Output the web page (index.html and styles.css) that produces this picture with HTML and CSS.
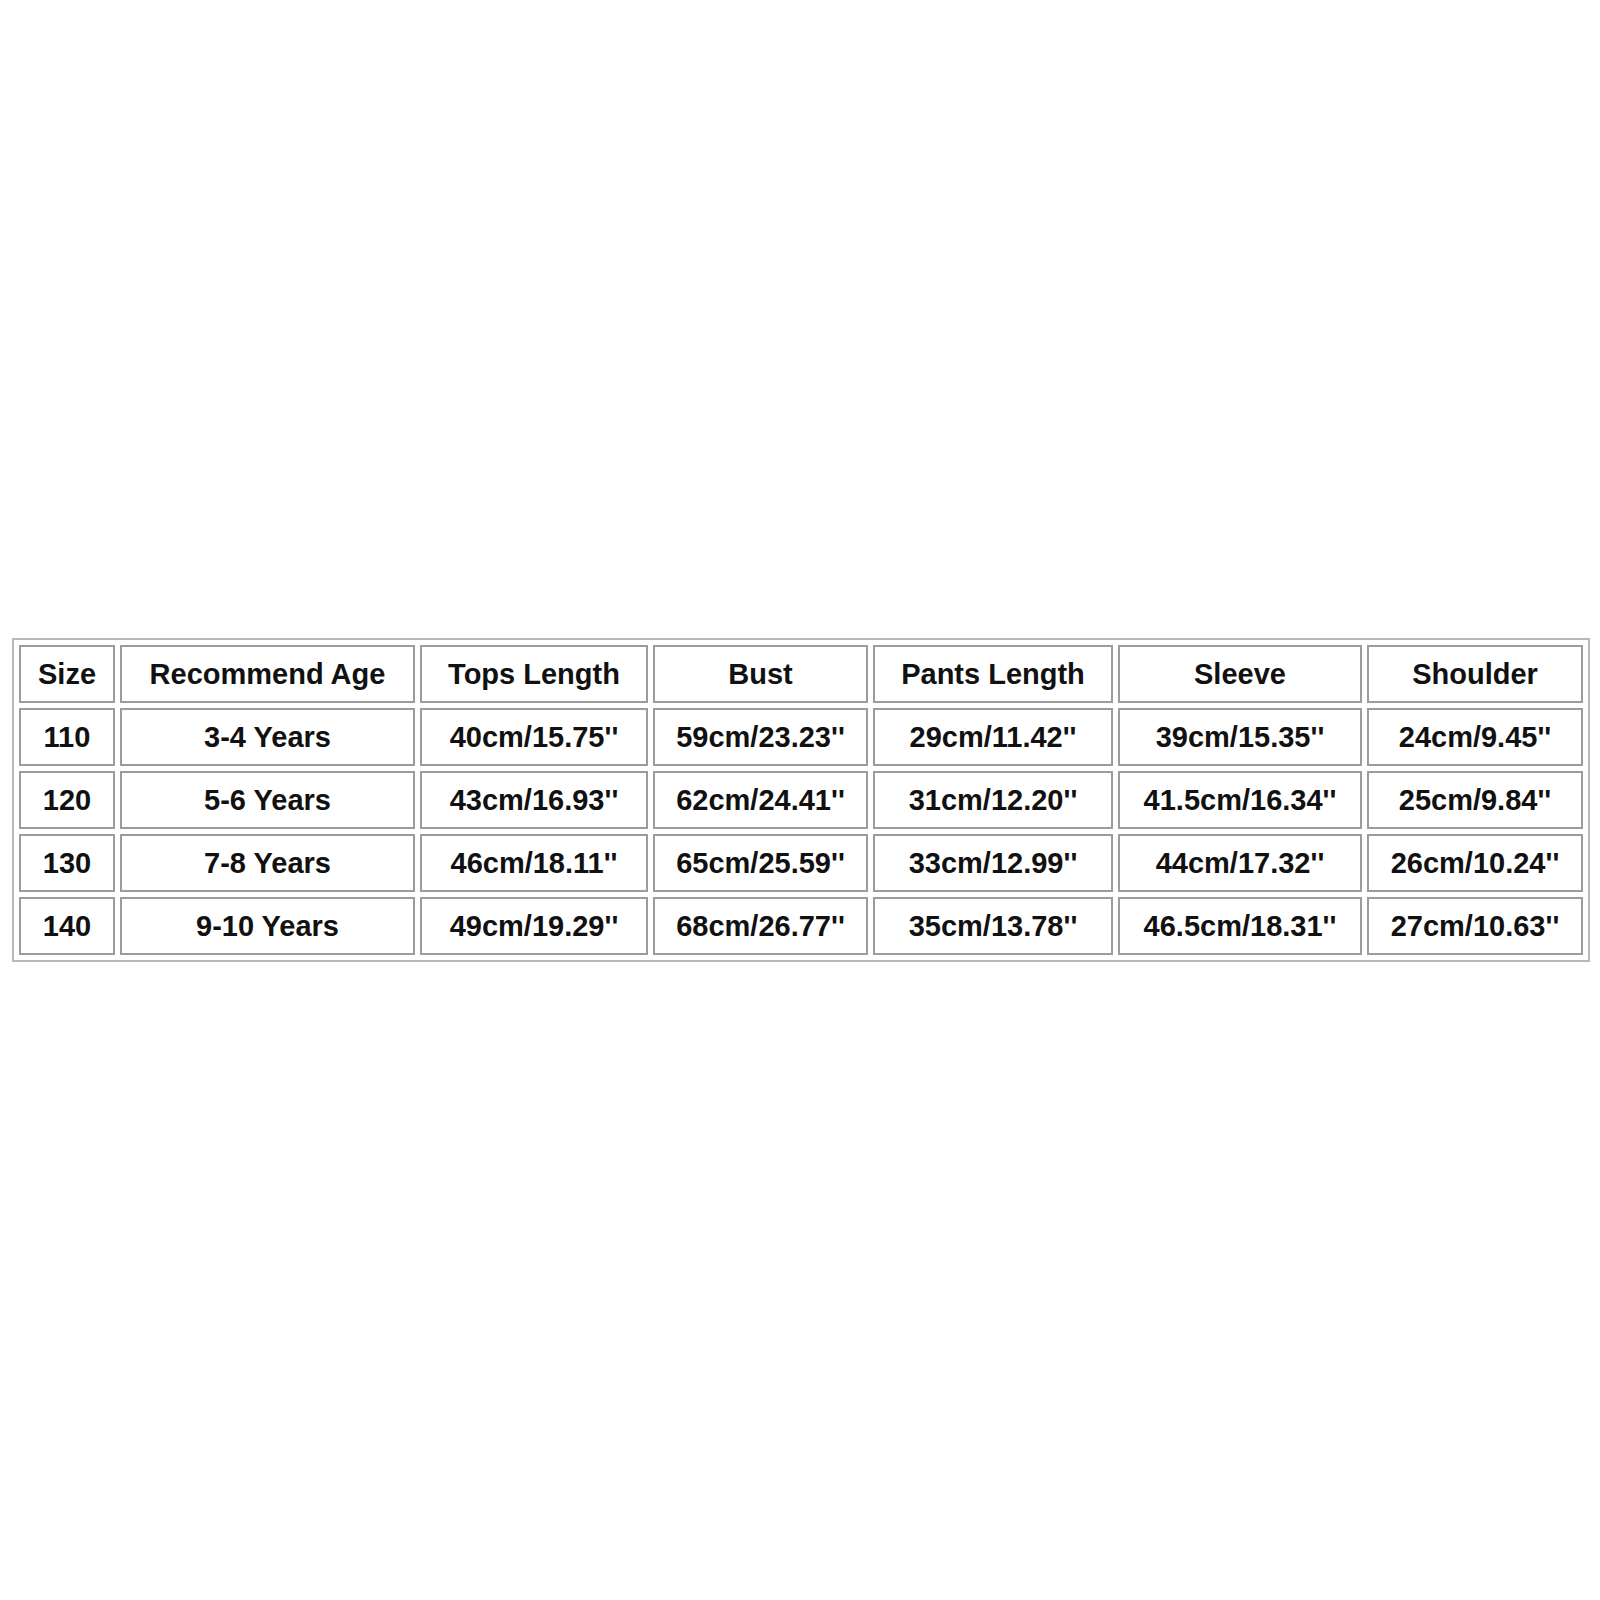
FILE: index.html
```html
<!DOCTYPE html>
<html>
<head>
<meta charset="utf-8">
<link rel="stylesheet" href="styles.css">
</head>
<body>
<div class="page">
<table class="size-table">
  <colgroup>
    <col class="c1"><col class="c2"><col class="c3"><col class="c4"><col class="c5"><col class="c6"><col class="c7">
  </colgroup>
  <tr><td>Size</td><td>Recommend Age</td><td>Tops Length</td><td>Bust</td><td>Pants Length</td><td>Sleeve</td><td>Shoulder</td></tr>
  <tr><td>110</td><td>3-4 Years</td><td>40cm/15.75''</td><td>59cm/23.23''</td><td>29cm/11.42''</td><td>39cm/15.35''</td><td>24cm/9.45''</td></tr>
  <tr><td>120</td><td>5-6 Years</td><td>43cm/16.93''</td><td>62cm/24.41''</td><td>31cm/12.20''</td><td>41.5cm/16.34''</td><td>25cm/9.84''</td></tr>
  <tr><td>130</td><td>7-8 Years</td><td>46cm/18.11''</td><td>65cm/25.59''</td><td>33cm/12.99''</td><td>44cm/17.32''</td><td>26cm/10.24''</td></tr>
  <tr><td>140</td><td>9-10 Years</td><td>49cm/19.29''</td><td>68cm/26.77''</td><td>35cm/13.78''</td><td>46.5cm/18.31''</td><td>27cm/10.63''</td></tr>
</table>
</div>
</body>
</html>
```
FILE: styles.css
```css
html, body {
  margin: 0;
  padding: 0;
  background: #ffffff;
}
.page {
  width: 1600px;
  height: 1600px;
  padding-top: 638px;
  padding-left: 12px;
  box-sizing: border-box;
}
.size-table {
  border: 2px solid #b8b8b8;
  border-collapse: separate;
  border-spacing: 5px 5px;
  table-layout: fixed;
  width: 1578px;
  font-family: "Liberation Sans", Arial, sans-serif;
  font-weight: bold;
  font-size: 29px;
  color: #111111;
}
.c1 { width: 96px; }
.c2 { width: 295px; }
.c3 { width: 228px; }
.c4 { width: 215px; }
.c5 { width: 240px; }
.c6 { width: 244px; }
.c7 { width: 216px; }
.size-table td {
  border: 2px solid #9c9c9c;
  height: 58px;
  padding: 0;
  text-align: center;
  vertical-align: middle;
  box-sizing: border-box;
  white-space: nowrap;
}
```
